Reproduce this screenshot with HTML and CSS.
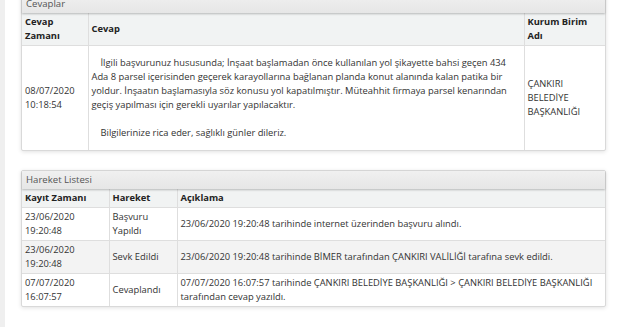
FILE: index.html
```html
<!DOCTYPE html>
<html lang="tr">
<head>
    <meta charset="UTF-8">
    <title>Başvuru Detayı</title>
    <link rel="stylesheet" href="styles.css">
</head>
<body>
    <div class="page">
        <!-- Cevaplar -->
        <div class="panel panel-first">
            <div class="panel-heading">Cevaplar</div>
            <table class="grid">
                <colgroup>
                    <col style="width: 66px">
                    <col>
                    <col style="width: 81px">
                </colgroup>
                <tr class="head">
                    <th>Cevap Zamanı</th>
                    <th>Cevap</th>
                    <th>Kurum Birim Adı</th>
                </tr>
                <tr>
                    <td>08/07/2020 10:18:54</td>
                    <td class="answer">
                        <p>İlgili başvurunuz hususunda; İnşaat başlamadan önce kullanılan yol şikayette bahsi geçen 434 Ada 8 parsel içerisinden geçerek karayollarına bağlanan planda konut alanında kalan patika bir yoldur. İnşaatın başlamasıyla söz konusu yol kapatılmıştır. Müteahhit firmaya parsel kenarından geçiş yapılması için gerekli uyarılar yapılacaktır.</p>
                        <p>Bilgilerinize rica eder, sağlıklı günler dileriz.</p>
                    </td>
                    <td>ÇANKIRI BELEDİYE BAŞKANLIĞI</td>
                </tr>
            </table>
        </div>

        <!-- Hareket Listesi -->
        <div class="panel">
            <div class="panel-heading">Hareket Listesi</div>
            <table class="grid">
                <colgroup>
                    <col style="width: 87px">
                    <col style="width: 68px">
                    <col>
                </colgroup>
                <tr class="head">
                    <th>Kayıt Zamanı</th>
                    <th>Hareket</th>
                    <th>Açıklama</th>
                </tr>
                <tr>
                    <td>23/06/2020 19:20:48</td>
                    <td>Başvuru Yapıldı</td>
                    <td>23/06/2020 19:20:48 tarihinde internet üzerinden başvuru alındı.</td>
                </tr>
                <tr class="alt">
                    <td>23/06/2020 19:20:48</td>
                    <td>Sevk Edildi</td>
                    <td>23/06/2020 19:20:48 tarihinde BİMER tarafından ÇANKIRI VALİLİĞİ tarafına sevk edildi.</td>
                </tr>
                <tr>
                    <td>07/07/2020 16:07:57</td>
                    <td>Cevaplandı</td>
                    <td>07/07/2020 16:07:57 tarihinde ÇANKIRI BELEDİYE BAŞKANLIĞI &gt; ÇANKIRI BELEDİYE BAŞKANLIĞI tarafından cevap yazıldı.</td>
                </tr>
            </table>
        </div>
    </div>
</body>
</html>
```

FILE: styles.css
```css
body {
    margin: 0;
    padding: 0;
    background-color: #efefef;
    font-family: "Open Sans", "Liberation Sans", sans-serif;
    font-size: 9.35px;
    line-height: 14px;
    color: #333;
    overflow: hidden;
}

.page {
    margin-left: 5px;
    background-color: #fff;
    padding: 0 14px 40px 16px;
    min-height: 100vh;
}

.panel {
    background-color: #fff;
    border: 1px solid #d9d9d9;
    border-radius: 2px;
    box-shadow: 0 1px 4px rgba(0, 0, 0, 0.12);
    margin-top: 19px;
}

.panel-first {
    margin-top: -6px;
}

.panel-heading {
    height: 18px;
    line-height: 18px;
    padding: 0 4px;
    font-size: 9.6px;
    color: #555;
    background: linear-gradient(#f0f0f0, #e6e6e6);
    box-shadow: 0 1px 2px rgba(0, 0, 0, 0.25);
    position: relative;
}

.grid {
    width: 100%;
    border-collapse: collapse;
    table-layout: fixed;
}

.grid th,
.grid td {
    border: 1px solid #dedede;
    padding: 2px 3px;
    text-align: left;
    vertical-align: middle;
}

.grid tr:first-child th {
    border-top: none;
}

.grid th:first-child,
.grid td:first-child {
    border-left: none;
}

.grid th:last-child,
.grid td:last-child {
    border-right: none;
}

.grid tr:last-child td {
    border-bottom: none;
}

.grid .head th {
    background-color: #f1f3f3;
    font-weight: 700;
    color: #222;
}

.grid .alt td {
    background-color: #f3f3f3;
}

.grid .answer {
    padding-top: 10px;
    padding-bottom: 10px;
}

.answer p {
    margin: 0 0 14px;
    text-indent: 9px;
}

.answer p:last-child {
    margin-bottom: 0;
}
```
